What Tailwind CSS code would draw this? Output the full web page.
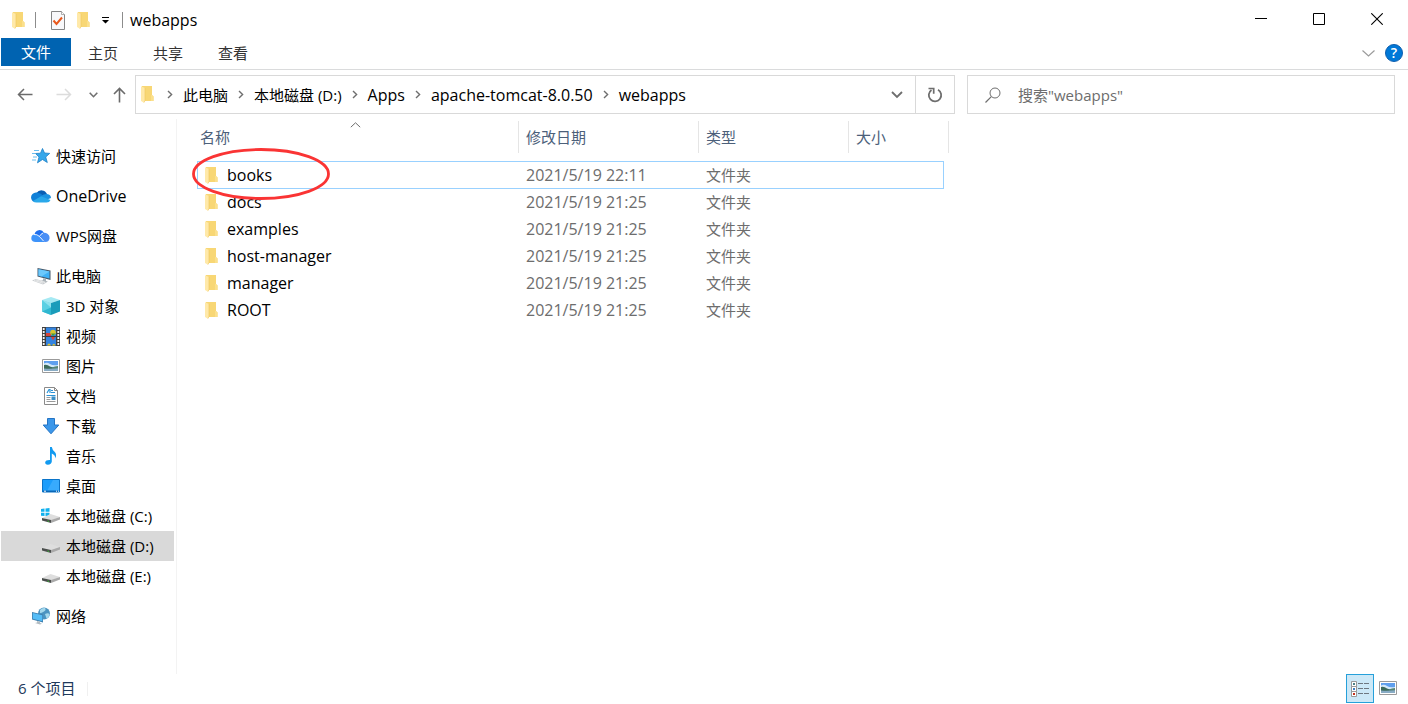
<!DOCTYPE html>
<html lang="zh-CN">
<head>
<meta charset="utf-8">
<title>webapps</title>
<script src="https://cdn.jsdelivr.net/npm/@tailwindcss/browser@4"></script>
</head>
<body class="flex min-h-screen flex-col bg-white font-['Open_Sans','Noto_Sans_CJK_SC',sans-serif] text-[15px] leading-5 text-black">

<svg class="hidden" aria-hidden="true">
  <symbol id="folder" viewBox="0 0 13 17">
    <path d="M1 0h10v9l1.500 1.500v4.500h-9.500l-2-2z" fill="#f8d775"/>
    <path d="M11 9l1.500 1.500v4.500h-2.500v-6z" fill="#fbe08c"/>
    <path d="M0 .3l4 1.700v12.500l-1 2.200-3-1.700z" fill="#ffe9a9"/>
    <path d="M4 2v12.500l-1 2" fill="none" stroke="#efc65b" stroke-width=".6"/>
  </symbol>
  <symbol id="crumb" viewBox="0 0 6 9"><path d="M1 1l3.600 3.500L1 8" fill="none" stroke="#6e6e6e" stroke-width="1.400"/></symbol>
  <symbol id="picture" viewBox="0 0 18 14">
    <path d="M.5.5h17v13H.5z" fill="#fff" stroke="#9a9a9a"/>
    <path d="M2 2h14v10H2z" fill="#5f9fee"/>
    <path d="M2 4.500q3-1.500 6 .5t8 1v2H2z" fill="#d4e9fa"/>
    <path d="M2 6q3-.8 6 1.500l4 1.500h4v1H2z" fill="#3d6b5b"/>
    <path d="M10 8.500q3-1.500 6-1.500v2.500h-6z" fill="#578573"/>
    <path d="M2 9.500q7 .5 14-.2V12H2z" fill="#88abc4"/>
  </symbol>
  <symbol id="drive" viewBox="0 0 18 9">
    <path d="M0 4L8.500 0 18 3 9 6.500z" fill="#dedede"/>
    <path d="M0 4l9 2v3L0 6.500z" fill="#4b4f4d"/>
    <path d="M9 6l9-3v2.500L9 9z" fill="#a9a9a9"/>
    <path d="M5.500 6.500l1.500.4v.8l-1.500-.4z" fill="#35d02f"/>
  </symbol>
</svg>

<header>
  <div class="flex h-[38px]">
    <div class="flex items-center pt-0.5">
      <svg class="ml-3 h-[17px] w-[13px]"><use href="#folder"/></svg>
      <span class="ml-[10px] h-4 w-px bg-[#8c8c8c]"></span>
      <button class="ml-[15px]" aria-label="属性">
        <svg class="block h-[19px] w-[14px]" viewBox="0 0 14 19">
          <path d="M.5.5h10l3 3v15H.5z" fill="#f8f8fa" stroke="#858585"/>
          <path d="M10.500.5v3h3" fill="#fff" stroke="#9a9a9a" stroke-width=".8"/>
          <path d="M2.500 9.500l3 3.500 5.500-6.500" fill="none" stroke="#e8581c" stroke-width="2"/>
        </svg>
      </button>
      <button class="ml-3" aria-label="新建文件夹"><svg class="block h-[17px] w-[13px]"><use href="#folder"/></svg></button>
      <button class="ml-3" aria-label="自定义快速访问工具栏">
        <svg class="block h-[7px] w-[7px]" viewBox="0 0 7 7"><path d="M0 0h7v1H0zM0 3h7L3.500 6.500z"/></svg>
      </button>
      <span class="ml-[13px] h-4 w-px bg-[#8c8c8c]"></span>
      <h1 class="ml-[7px] text-base leading-5">webapps</h1>
    </div>
    <div class="ml-auto flex pr-0.5">
      <button class="grid w-[58px] place-items-center" aria-label="最小化"><svg class="h-3 w-3" viewBox="0 0 12 12"><path d="M0 5h12v1H0z"/></svg></button>
      <button class="grid w-[58px] place-items-center" aria-label="最大化"><svg class="h-3 w-3" viewBox="0 0 12 12"><path d="M.5.5h11v11H.5z" fill="none" stroke="#000"/></svg></button>
      <button class="grid w-[58px] place-items-center" aria-label="关闭"><svg class="h-3 w-3" viewBox="0 0 12 12"><path d="M.3.3l11.400 11.400M11.700.3L.3 11.700" stroke="#000" stroke-width="1.100"/></svg></button>
    </div>
  </div>

  <div class="flex h-8 items-start border-b border-[#dadbdc] pl-px text-[#333]">
    <button class="h-7 w-[70px] bg-[#0063b1] text-white">文件</button>
    <button class="ml-[17px] h-[30px]">主页</button>
    <button class="ml-[35px] h-[30px]">共享</button>
    <button class="ml-[35px] h-[30px]">查看</button>
    <button class="ml-auto mt-3" aria-label="展开功能区"><svg class="block h-[7px] w-[13px]" viewBox="0 0 13 7"><path d="M.5.5l6 5.500 6-5.500" fill="none" stroke="#9b9b9b" stroke-width="1.200"/></svg></button>
    <button class="ml-[10px] mr-[5px] mt-[6px] h-[18px] w-[18px] rounded-full border border-[#0f5fae] bg-[#0078d7] text-sm leading-4 font-semibold text-white" aria-label="帮助">?</button>
  </div>

  <div class="flex h-[49px] items-center pr-[13px] pl-[17px]">
    <button aria-label="后退"><svg class="block h-[13px] w-4" viewBox="0 0 16 13"><path d="M15.500 6.500H1.500M7 1L1.500 6.500 7 12" fill="none" stroke="#6b6b6b" stroke-width="1.500"/></svg></button>
    <button class="ml-[23px]" aria-label="前进"><svg class="block h-[13px] w-4" viewBox="0 0 16 13"><path d="M.5 6.500h14M9 1l5.500 5.500L9 12" fill="none" stroke="#dcdcdc" stroke-width="1.500"/></svg></button>
    <button class="ml-[17px]" aria-label="最近浏览的位置"><svg class="block h-[6px] w-[9px]" viewBox="0 0 9 6"><path d="M.7.700l3.800 4 3.800-4" fill="none" stroke="#707070" stroke-width="1.600"/></svg></button>
    <button class="ml-[15px]" aria-label="上移"><svg class="block h-4 w-[13px]" viewBox="0 0 13 16"><path d="M6.500 15.500v-14M1 7l5.500-5.500L12 7" fill="none" stroke="#6b6b6b" stroke-width="1.600"/></svg></button>
    <div class="ml-[9px] flex h-[39px] min-w-0 flex-1 items-center border border-[#d9d9d9] pl-[5px]">
      <svg class="h-[17px] w-[13px] shrink-0"><use href="#folder"/></svg>
      <nav class="ml-[13px] flex items-center gap-[10px] whitespace-nowrap" aria-label="路径">
        <svg class="h-[9px] w-[6px]"><use href="#crumb"/></svg>
        <button>此电脑</button>
        <svg class="h-[9px] w-[6px]"><use href="#crumb"/></svg>
        <button>本地磁盘 (D:)</button>
        <svg class="h-[9px] w-[6px]"><use href="#crumb"/></svg>
        <button class="text-base leading-5">Apps</button>
        <svg class="h-[9px] w-[6px]"><use href="#crumb"/></svg>
        <button class="text-base leading-5">apache-tomcat-8.0.50</button>
        <svg class="h-[9px] w-[6px]"><use href="#crumb"/></svg>
        <button class="text-base leading-5">webapps</button>
      </nav>
      <button class="ml-auto mr-3" aria-label="以前的位置"><svg class="block h-[8px] w-[12px]" viewBox="0 0 12 8"><path d="M1 1l5 5 5-5" fill="none" stroke="#6e6e6e" stroke-width="1.800"/></svg></button>
      <button class="grid h-full w-[39px] place-items-center border-l border-[#d9d9d9]" aria-label="刷新">
        <svg class="block h-4 w-4" viewBox="0 0 16 16"><path d="M11 2.700A6.200 6.200 0 1 1 4.500 3" fill="none" stroke="#6e6e6e" stroke-width="1.800"/><path d="M1.500 1.500h5.200v5.200" fill="none" stroke="#6e6e6e" stroke-width="1.700"/></svg>
      </button>
    </div>
    <label class="ml-3 flex h-[39px] w-[428px] items-center border border-[#d9d9d9] pl-[17px]">
      <svg class="h-4 w-4 shrink-0" viewBox="0 0 16 16" aria-label="搜索"><circle cx="10" cy="6" r="5" fill="none" stroke="#6e6e6e"/><path d="M6.300 9.700L.5 15.500" stroke="#6e6e6e" stroke-width="1.200"/></svg>
      <input type="text" placeholder='搜索"webapps"' class="ml-[17px] min-w-0 flex-1 outline-none placeholder:text-[#6d6d6d]">
    </label>
  </div>
</header>

<div class="flex flex-1">
  <nav class="w-[177px] shrink-0 border-r border-[#f3f3f3] pt-[22px] pr-[2px] pl-px" aria-label="导航窗格">
    <a href="#" class="flex h-[30px] items-center gap-[6px] pl-[31px]">
      <svg class="h-[18px] w-[18px]" viewBox="0 0 18 18"><path d="M10.500 1.500l2 4.500 5.200.4-4 3.600 1.600 5.500-4.800-3-5 3.300 1.500-5.700L3.500 6.500l5-.3z" fill="#35a7ea" stroke="#1b7fc6" stroke-width=".8"/><path d="M2 3.500h5M0 6.500h3M1 10h4M0 13h4" stroke="#69bdf0"/></svg>快速访问</a>
    <a href="#" class="mt-[10px] flex h-[30px] items-center gap-[5px] pl-[30px]">
      <svg class="h-[14px] w-5" viewBox="0 0 20 14"><path d="M5.500 4A6 6 0 0 1 16 5l-5 4z" fill="#0a5fb4"/><path d="M6 3.500a5 5 0 0 0-5.800 6Q1 13 5 13l8-5.500Q10 4 6 3.500z" fill="#1080d8"/><path d="M10 7.500q2-3 6-2.500 4 .5 4 4l-5 2z" fill="#1c92e0"/><path d="M2 12l8-4.700L19.500 11q-1 2.500-4 2.500h-10Q3 13.500 2 12z" fill="#2aa8ea"/></svg><span class="text-base leading-5">OneDrive</span></a>
    <a href="#" class="mt-[10px] flex h-[30px] items-center gap-[6px] pl-[30px]">
      <svg class="h-[14px] w-[19px]" viewBox="0 0 19 14"><path d="M3.500 5.500A5 5 0 0 1 13 4l-3 6z" fill="#1f6fee"/><path d="M1.500 6q3.500-2 6.500 1l6 6H4.500Q1 13 .3 10 0 7.500 1.500 6z" fill="#3d93fa"/><path d="M9 6.500q2-3.500 6-2.500 4 1.500 3.500 5.500-.7 3.500-4 3.500-2 0-3.500-2z" fill="#4a8ff5"/><path d="M3 5.500q3-.5 5.500 2l4 4.500M8.500 7.500q1-2.500 3.500-3.500" fill="none" stroke="#fff" stroke-width=".9"/></svg>WPS网盘</a>
    <a href="#" class="mt-[10px] flex h-[30px] items-center gap-[5px] pl-[31px]">
      <svg class="h-[18px] w-[19px]" viewBox="0 0 19 18"><path d="M5.500 1L18.500 3.500v9.500L5.500 9.500z" fill="#47596a"/><path d="M6.500 2.200l11 2.200v7.200L6.500 8.700z" fill="#3fb0f5"/><path d="M6.500 2.200l11 2.200-8 5.100-3-.8z" fill="#6cc8fb"/><path d="M11 11.200l3 .7v2l2 .6-2 .8-5-1.500 2-.6z" fill="#aab2b8"/><path d="M0 13.500l4-1.500 11 3.300-4 2.200z" fill="#c9cdd0"/><path d="M2 13.500l9 2.700M4 12.900l9 2.600" stroke="#f3f3f3" stroke-width=".7"/></svg><span>此电脑</span></a>
    <a href="#" class="flex h-[30px] items-center gap-[6px] pl-[41px]">
      <svg class="h-[18px] w-[18px]" viewBox="0 0 18 18"><path d="M9 0l9 3-9 3-9-3z" fill="#a5e9f3"/><path d="M0 3l9 3v12l-9-3.500z" fill="#5bd0e3"/><path d="M18 3L9 6v12l9-3.500z" fill="#1a9cba"/><path d="M0 14.500l9-4v7.500z" fill="#2fb7d0"/><path d="M0 3l9 3v4.500z" fill="#8fe2ee"/></svg>3D 对象</a>
    <a href="#" class="flex h-[30px] items-center gap-[6px] pl-[41px]">
      <svg class="h-[19px] w-[18px]" viewBox="0 0 18 19"><path d="M0 0h18v19H0z" fill="#3e3e3e"/><path d="M4 .5h10v8.500H4zM4 10h10v8.500H4z" fill="#3383e0"/><path d="M4 6h5v3H4z" fill="#d8433a"/><circle cx="11" cy="5.500" r="2.800" fill="#d8c52e"/><path d="M9 6.500l2 2.500 2.500-2.500z" fill="#3d9a44"/><path d="M9 10h4l-2 3.500z" fill="#d8433a"/><path d="M5 18.500q2-4 4 0zM10 18.500q2-3.500 3.500 0z" fill="#e3c531"/><path d="M1.700 1v18M16.300 1v18" stroke="#f4f4f4" stroke-width="1.800" stroke-dasharray="2 1"/></svg>视频</a>
    <a href="#" class="flex h-[30px] items-center gap-[6px] pl-[41px]"><svg class="h-[14px] w-[18px]"><use href="#picture"/></svg>图片</a>
    <a href="#" class="flex h-[30px] items-center gap-[6px] pl-[41px]">
      <svg class="h-[18px] w-[18px]" viewBox="0 0 18 18"><path d="M2.500.5h10l3 3v14h-13z" fill="#fff" stroke="#8a8a8a"/><path d="M12.500.5v3h3" fill="none" stroke="#8a8a8a"/><path d="M5 6l2-3.500h1V6M9 3.500h2M9 5.500h4M4.500 8.500h9" fill="none" stroke="#2b93d6" stroke-width="1.200"/><path d="M4.500 10.500h4M4.500 12.500h4M4.500 14.500h9" stroke="#9a9a9a"/><path d="M9.500 9.500h4v3.500h-4z" fill="#3c8fc6"/></svg>文档</a>
    <a href="#" class="flex h-[30px] items-center gap-[6px] pl-[41px]">
      <svg class="h-[18px] w-[18px]" viewBox="0 0 18 18"><path d="M5.500 1.500h7V8h4.300L9 16.800 1.200 8h4.300z" fill="#3b97ea" stroke="#2474c4"/></svg>下载</a>
    <a href="#" class="flex h-[30px] items-center gap-[6px] pl-[41px]">
      <svg class="h-[18px] w-[18px]" viewBox="0 0 18 18"><path d="M8 0h1.800q.5 3 3 5 2.300 2.500.5 6.500.2-3.500-3.500-5v8q-.3 3-4 3.300-2.800-.3-2.600-2.500.5-2.500 4.800-2.300z" fill="#129af0"/></svg>音乐</a>
    <a href="#" class="flex h-[30px] items-center gap-[6px] pl-[41px]">
      <svg class="h-[14px] w-[18px]" viewBox="0 0 18 14"><path d="M.5.5h17v12.500H.5z" fill="#1b9dfb" stroke="#0a74c9"/><path d="M11 1h6v11H5z" fill="#38abfd"/><path d="M1 11.500h16v1.500H1z" fill="#0a66b6"/><path d="M2 12.200h2M14 12.200h1M16 12.200h1" stroke="#fff"/></svg>桌面</a>
    <a href="#" class="flex h-[30px] items-center gap-[6px] pl-10 whitespace-nowrap">
      <svg class="h-4 w-[19px]" viewBox="0 0 19 16"><path d="M0 1l3.500-.5v3.300H0zM4.500.4L8.500 0v3.800h-4zM0 4.800h3.500V8L0 7.700zM4.500 4.800h4v3.700l-4-.4z" fill="#12b1ee"/><use href="#drive" x="1" y="6" width="18" height="9"/></svg>本地磁盘 (C:)</a>
    <a href="#" aria-current="page" class="flex h-[30px] items-center gap-[6px] bg-[#d9d9d9] pl-[41px] whitespace-nowrap"><svg class="mt-1 h-[9px] w-[18px]"><use href="#drive"/></svg>本地磁盘 (D:)</a>
    <a href="#" class="flex h-[30px] items-center gap-[6px] pl-[41px] whitespace-nowrap"><svg class="mt-1 h-[9px] w-[18px]"><use href="#drive"/></svg>本地磁盘 (E:)</a>
    <a href="#" class="mt-[10px] flex h-[30px] items-center gap-[6px] pl-[31px]">
      <svg class="h-[18px] w-[18px]" viewBox="0 0 18 18"><circle cx="12" cy="6.500" r="6" fill="#4b93c0"/><path d="M8 3q2-2.500 5-2 1.500 2-1 3.500T8 6zM13 7q3-1.500 4.500 0 0 3-3 4.500z" fill="#a5d8ec"/><path d="M0 5l11 2.500v8L0 12.500z" fill="#3f7fae"/><path d="M.8 6l9.500 2.200v6L.8 11.700z" fill="#55bdf7"/><path d="M5 14l3 .8v1.200l2 .8-2 .8-5-1.500 2-.6z" fill="#b3bcc2"/></svg>网络</a>
  </nav>

  <main class="min-w-0 flex-1 pt-[2px] pl-5">
    <div class="relative w-[752px]">
      <table class="w-full table-fixed border-separate border-spacing-0 text-[#6d6d6d]">
        <colgroup><col class="w-[322px]"><col class="w-[180px]"><col class="w-[150px]"><col class="w-[95px]"><col class="w-[5px]"></colgroup>
        <thead class="text-left text-[#4c607a]">
          <tr class="h-8">
            <th class="relative border-r border-[#e5e5e5] p-0 pl-[3px] font-normal" aria-sort="ascending">名称
              <svg class="absolute top-px left-[153px] h-[6px] w-[11px]" viewBox="0 0 11 6"><path d="M.8 5.200L5.500.8l4.700 4.400" fill="none" stroke="#6d6d6d"/></svg></th>
            <th class="border-r border-[#e5e5e5] p-0 pl-[7px] font-normal">修改日期</th>
            <th class="border-r border-[#e5e5e5] p-0 pl-[7px] font-normal">类型</th>
            <th colspan="2" class="border-r border-[#e5e5e5] p-0 pl-[7px] font-normal">大小</th>
          </tr>
          <tr class="h-2"><td colspan="5" class="p-0"></td></tr>
        </thead>
        <tbody>
          <tr class="h-7">
            <td class="border-y border-l border-[#99d1ff] p-0 pl-[7px]"><div class="flex items-center gap-[9px] text-base leading-5 text-black"><svg class="h-[17px] w-[13px]"><use href="#folder"/></svg>books</div></td>
            <td class="border-y border-[#99d1ff] p-0 pl-[7px] text-base leading-5">2021/5/19 22:11</td><td class="border-y border-[#99d1ff] p-0 pl-[7px]">文件夹</td><td class="border-y border-r border-[#99d1ff] p-0"></td><td class="p-0"></td>
          </tr>
          <tr class="h-[27px]">
            <td class="p-0 pb-px pl-2"><div class="flex items-center gap-[9px] text-base leading-5 text-black"><svg class="h-[17px] w-[13px]"><use href="#folder"/></svg>docs</div></td>
            <td class="p-0 pb-px pl-[7px] text-base leading-5">2021/5/19 21:25</td><td class="p-0 pb-px pl-[7px]">文件夹</td><td class="p-0"></td><td class="p-0"></td>
          </tr>
          <tr class="h-[27px]">
            <td class="p-0 pb-px pl-2"><div class="flex items-center gap-[9px] text-base leading-5 text-black"><svg class="h-[17px] w-[13px]"><use href="#folder"/></svg>examples</div></td>
            <td class="p-0 pb-px pl-[7px] text-base leading-5">2021/5/19 21:25</td><td class="p-0 pb-px pl-[7px]">文件夹</td><td class="p-0"></td><td class="p-0"></td>
          </tr>
          <tr class="h-[27px]">
            <td class="p-0 pb-px pl-2"><div class="flex items-center gap-[9px] text-base leading-5 text-black"><svg class="h-[17px] w-[13px]"><use href="#folder"/></svg>host-manager</div></td>
            <td class="p-0 pb-px pl-[7px] text-base leading-5">2021/5/19 21:25</td><td class="p-0 pb-px pl-[7px]">文件夹</td><td class="p-0"></td><td class="p-0"></td>
          </tr>
          <tr class="h-[27px]">
            <td class="p-0 pb-px pl-2"><div class="flex items-center gap-[9px] text-base leading-5 text-black"><svg class="h-[17px] w-[13px]"><use href="#folder"/></svg>manager</div></td>
            <td class="p-0 pb-px pl-[7px] text-base leading-5">2021/5/19 21:25</td><td class="p-0 pb-px pl-[7px]">文件夹</td><td class="p-0"></td><td class="p-0"></td>
          </tr>
          <tr class="h-[27px]">
            <td class="p-0 pb-px pl-2"><div class="flex items-center gap-[9px] text-base leading-5 text-black"><svg class="h-[17px] w-[13px]"><use href="#folder"/></svg>ROOT</div></td>
            <td class="p-0 pb-px pl-[7px] text-base leading-5">2021/5/19 21:25</td><td class="p-0 pb-px pl-[7px]">文件夹</td><td class="p-0"></td><td class="p-0"></td>
          </tr>
        </tbody>
      </table>
      <svg class="pointer-events-none absolute top-[27px] -left-[5px] h-[52px] w-[138px]" viewBox="0 0 138 52" aria-hidden="true"><ellipse cx="69" cy="26" rx="67.500" ry="24.500" fill="none" stroke="#fa3434" stroke-width="2.800"/></svg>
    </div>
  </main>
</div>

<footer class="flex h-[30px] items-start pl-[18px] text-[#1e395b]">
  <span class="mt-1">6 个项目</span>
  <span class="mt-2 ml-3 h-[14px] w-px bg-[#f0f0f0]"></span>
  <button class="ml-auto grid h-[29px] w-7 place-items-center border border-[#26a0da] bg-[#cce8f7]" aria-label="详细信息">
    <svg class="h-4 w-[18px]" viewBox="0 0 18 16"><path d="M.5.500h5v5h-5zM.5 5.500h5v5h-5zM.5 10.500h5v5h-5z" fill="#fff" stroke="#999"/><path d="M2 2h2v2H2z" fill="#4a8188"/><path d="M2 7h2v2H2z" fill="#3f7fc4"/><path d="M2 12h2v2H2z" fill="#c5311c"/><path d="M7 2.500h5M13 2.500h5M7 7.500h5M13 7.500h5M7 12.500h5M13 12.500h5" stroke="#6e7780"/></svg>
  </button>
  <button class="mt-[7px] mr-[11px] ml-[5px]" aria-label="大图标"><svg class="block h-[14px] w-[18px]"><use href="#picture"/></svg></button>
</footer>
</body>
</html>
